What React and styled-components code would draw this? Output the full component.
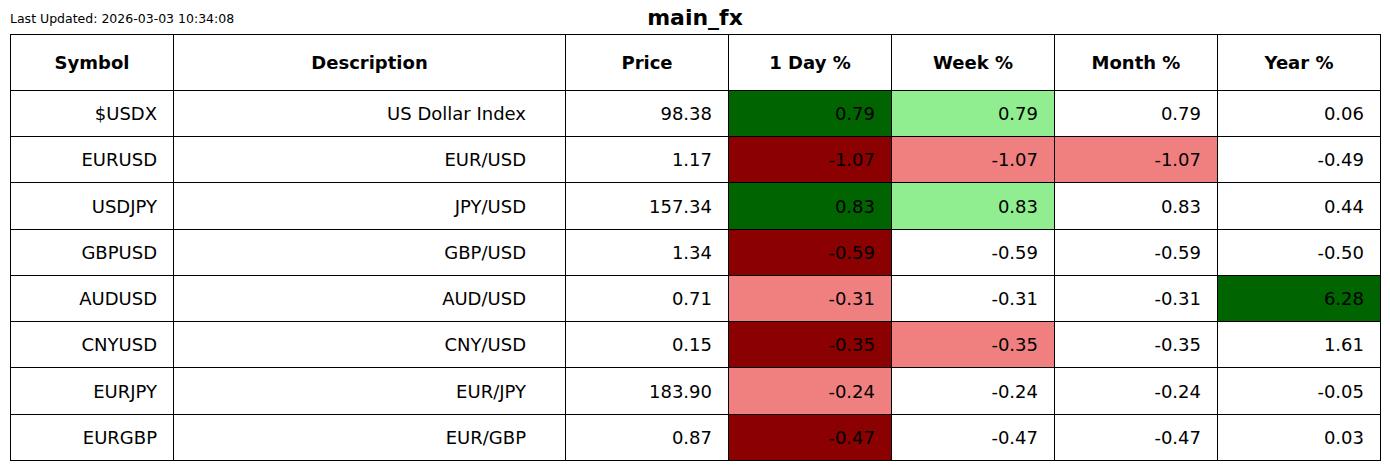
import React from "react";
import styled, { createGlobalStyle } from "styled-components";

const GlobalStyle = createGlobalStyle`
  html, body { margin: 0; padding: 0; background: #ffffff; }
  body { font-family: "DejaVu Sans", "Liberation Sans", sans-serif; color: #000; }
`;

const Page = styled.div`
  width: 1390px;
  height: 470px;
  background: #fff;
`;

const TopBar = styled.div`
  height: 34px;
  padding: 0 10px;
  display: grid;
  grid-template-columns: 1fr auto 1fr;
  align-items: start;
`;

const Updated = styled.div`
  font-size: 12.5px;
  line-height: normal;
  padding-top: 11px;
  white-space: nowrap;
`;

const Title = styled.h1`
  margin: 0;
  font-size: 22px;
  font-weight: bold;
  line-height: normal;
  padding-top: 5px;
  white-space: nowrap;
`;

const Grid = styled.div`
  margin-left: 10px;
  width: 1371px;
  box-sizing: border-box;
  display: grid;
  grid-template-columns: 163px 392px repeat(5, 163px);
  grid-template-rows: 56px 46px 46px 47px 46px 46px 46px 47px 46px;
  border-left: 1px solid #000;
  border-top: 1px solid #000;
`;

const Cell = styled.div`
  box-sizing: border-box;
  border-right: 1px solid #000;
  border-bottom: 1px solid #000;
  background: ${(p) => p.$bg || "#ffffff"};
  display: flex;
  align-items: center;
  justify-content: ${(p) => (p.$head ? "center" : "flex-end")};
  padding-right: ${(p) => (p.$head ? 0 : p.$pad)}px;
  font-size: 18px;
  line-height: normal;
  font-weight: ${(p) => (p.$head ? "bold" : "normal")};
  white-space: nowrap;
`;

const DG = "#006400";
const LG = "#90ee90";
const DR = "#8b0000";
const LC = "#f08080";

const headers = ["Symbol", "Description", "Price", "1 Day %", "Week %", "Month %", "Year %"];
const pads = [16, 39, 16, 16, 16, 16, 16];

const rows = [
  [["$USDX"], ["US Dollar Index"], ["98.38"], ["0.79", DG], ["0.79", LG], ["0.79"], ["0.06"]],
  [["EURUSD"], ["EUR/USD"], ["1.17"], ["-1.07", DR], ["-1.07", LC], ["-1.07", LC], ["-0.49"]],
  [["USDJPY"], ["JPY/USD"], ["157.34"], ["0.83", DG], ["0.83", LG], ["0.83"], ["0.44"]],
  [["GBPUSD"], ["GBP/USD"], ["1.34"], ["-0.59", DR], ["-0.59"], ["-0.59"], ["-0.50"]],
  [["AUDUSD"], ["AUD/USD"], ["0.71"], ["-0.31", LC], ["-0.31"], ["-0.31"], ["6.28", DG]],
  [["CNYUSD"], ["CNY/USD"], ["0.15"], ["-0.35", DR], ["-0.35", LC], ["-0.35"], ["1.61"]],
  [["EURJPY"], ["EUR/JPY"], ["183.90"], ["-0.24", LC], ["-0.24"], ["-0.24"], ["-0.05"]],
  [["EURGBP"], ["EUR/GBP"], ["0.87"], ["-0.47", DR], ["-0.47"], ["-0.47"], ["0.03"]],
];

export default function App() {
  return (
    <Page>
      <GlobalStyle />
      <TopBar>
        <Updated>Last Updated: 2026-03-03 10:34:08</Updated>
        <Title>main_fx</Title>
        <div />
      </TopBar>
      <Grid>
        {headers.map((h) => (
          <Cell key={h} $head>
            {h}
          </Cell>
        ))}
        {rows.map((r, i) =>
          r.map(([text, bg], j) => (
            <Cell key={`${i}-${j}`} $bg={bg} $pad={pads[j]}>
              {text}
            </Cell>
          ))
        )}
      </Grid>
    </Page>
  );
}
